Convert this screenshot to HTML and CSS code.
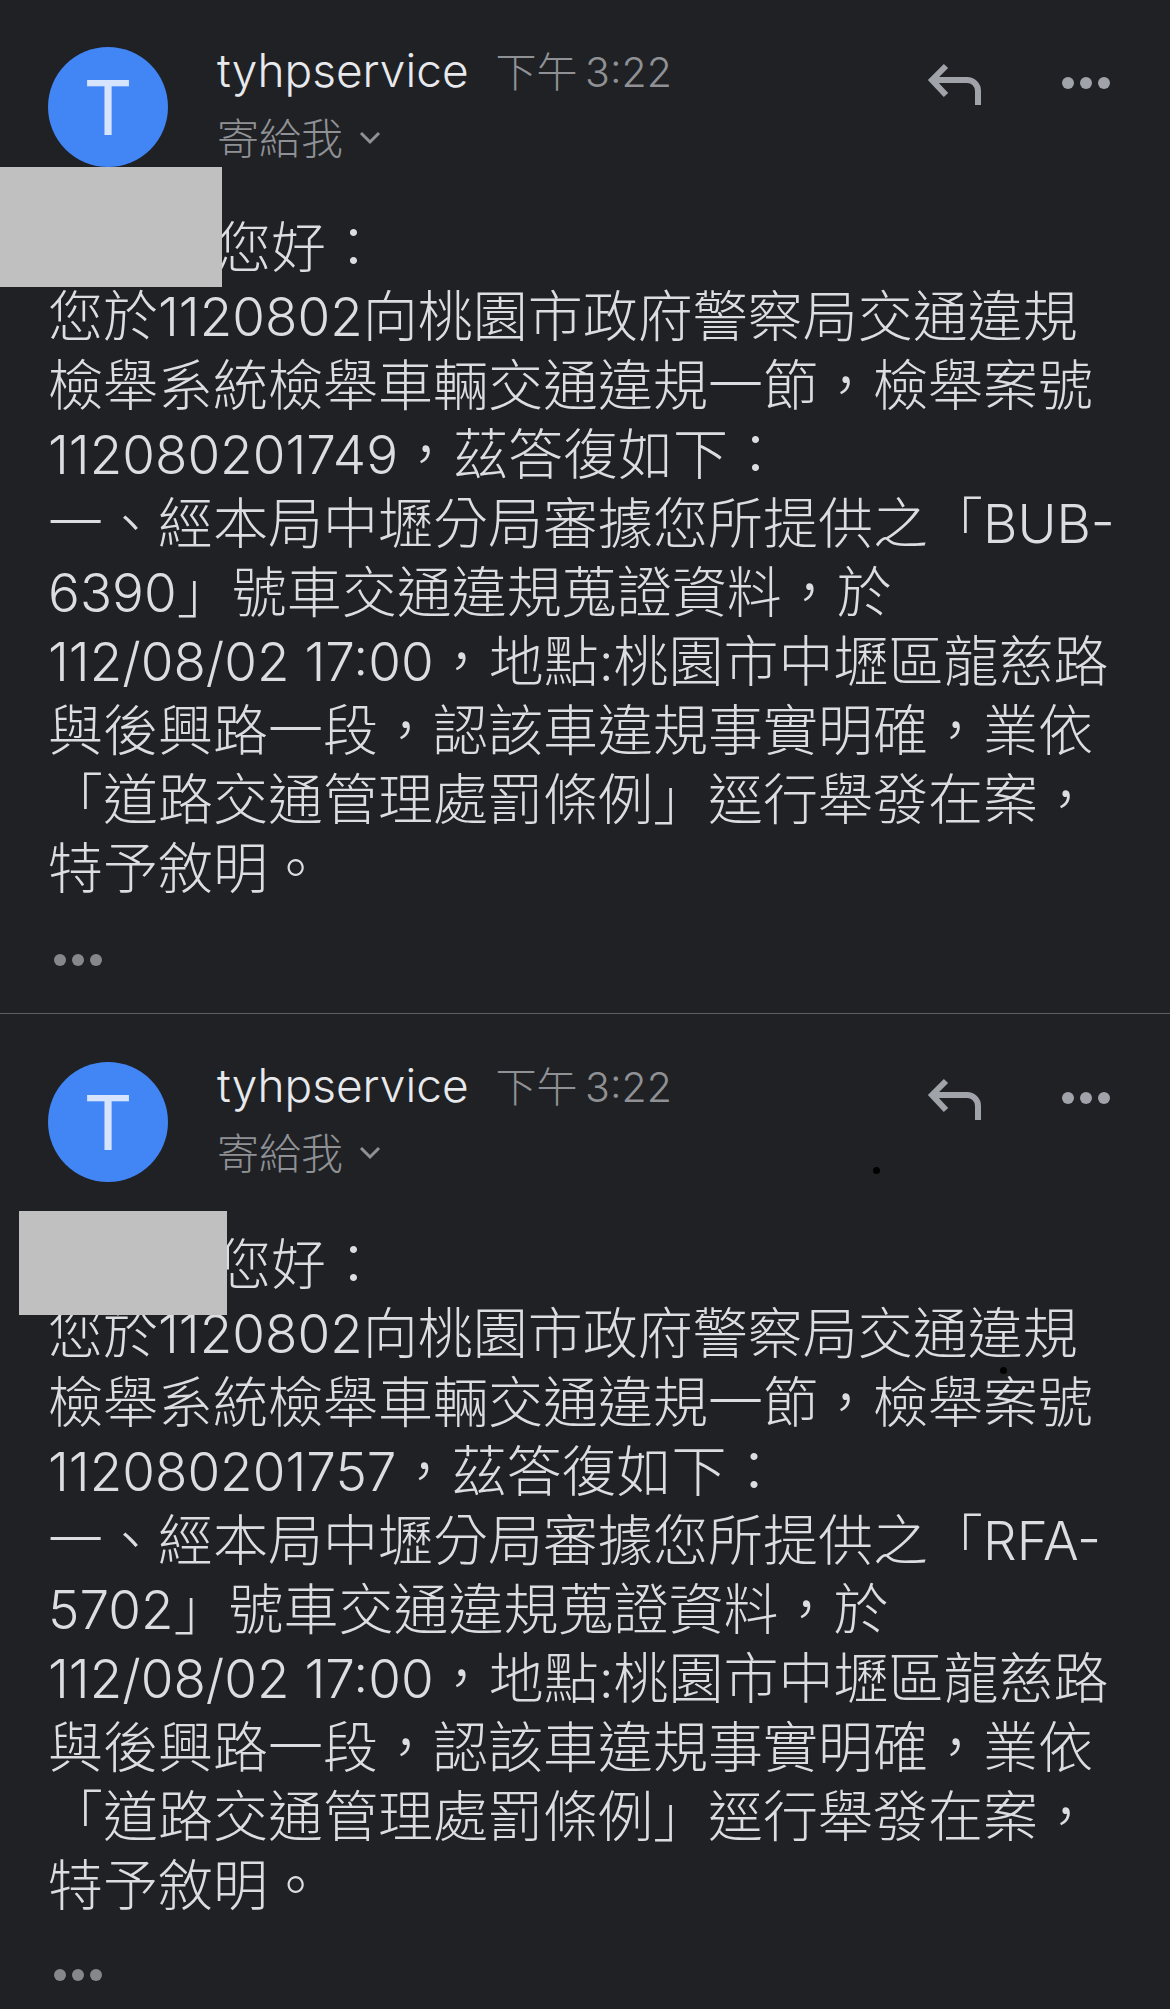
FILE: index.html
```html
<!DOCTYPE html>
<html lang="zh-Hant">
<head>
  <meta charset="UTF-8" />
  <title>tyhpservice</title>
  <link rel="stylesheet" href="styles.css">
</head>
<body>

<section class="mail mail-first">
  <div class="mail-head">
    <div class="avatar">T</div>
    <div class="meta">
      <div class="meta-top">
        <span class="sender">tyhpservice</span>
        <span class="time">下午 <span class="clock">3:22</span></span>
      </div>
      <div class="meta-to">
        <span>寄給我</span>
        <svg class="chevron" width="22" height="14" viewBox="0 0 22 14"><path d="M2 2 L11 11 L20 2" /></svg>
      </div>
    </div>
    <div class="actions">
      <svg class="reply" width="60" height="46" viewBox="0 0 60 46"><path d="M21 4 L7 18 L21 33 M7 18 H42 a11 11 0 0 1 11 11 V43" /></svg>
      <div class="dots"><span></span><span></span><span></span></div>
    </div>
  </div>
  <p class="body"><span class="greeting">您好：</span><br>您於<b>1120802</b>向桃園市政府警察局交通違規<br>檢舉系統檢舉車輛交通違規一節，檢舉案號<br><b>112080201749</b>，茲答復如下：<br>一、經本局中壢分局審據您所提供之「<b>BUB-</b><br><b>6390</b>」號車交通違規蒐證資料，於<br><b>112/08/02 17:00</b>，地點<b>:</b>桃園市中壢區龍慈路<br>與後興路一段，認該車違規事實明確，業依<br>「道路交通管理處罰條例」逕行舉發在案，<br>特予敘明。</p>
  <div class="dots dots-more"><span></span><span></span><span></span></div>
  <div class="redact redact-first"></div>
</section>

<section class="mail mail-second">
  <div class="mail-head">
    <div class="avatar">T</div>
    <div class="meta">
      <div class="meta-top">
        <span class="sender">tyhpservice</span>
        <span class="time">下午 <span class="clock">3:22</span></span>
      </div>
      <div class="meta-to">
        <span>寄給我</span>
        <svg class="chevron" width="22" height="14" viewBox="0 0 22 14"><path d="M2 2 L11 11 L20 2" /></svg>
      </div>
    </div>
    <div class="actions">
      <svg class="reply" width="60" height="46" viewBox="0 0 60 46"><path d="M21 4 L7 18 L21 33 M7 18 H42 a11 11 0 0 1 11 11 V43" /></svg>
      <div class="dots"><span></span><span></span><span></span></div>
    </div>
  </div>
  <p class="body"><span class="greeting">您好：</span><br>您於<b>1120802</b>向桃園市政府警察局交通違規<br>檢舉系統檢舉車輛交通違規一節，檢舉案號<br><b>112080201757</b>，茲答復如下：<br>一、經本局中壢分局審據您所提供之「<b>RFA-</b><br><b>5702</b>」號車交通違規蒐證資料，於<br><b>112/08/02 17:00</b>，地點<b>:</b>桃園市中壢區龍慈路<br>與後興路一段，認該車違規事實明確，業依<br>「道路交通管理處罰條例」逕行舉發在案，<br>特予敘明。</p>
  <div class="dots dots-more"><span></span><span></span><span></span></div>
  <div class="redact redact-second"></div>
  <i class="speck speck-a"></i>
  <i class="speck speck-b"></i>
</section>

</body>
</html>
```

FILE: styles.css
```css
body {
  margin: 0;
  background: #1f2125;
  font-family: Inter, "Noto Sans CJK TC", sans-serif;
  color: #dcdde0;
  overflow: hidden;
}
.mail {
  position: relative;
  padding: 47px 0 47px;
}
.mail-first {
  border-bottom: 1px solid #5e5f63;
}
.mail-second {
  padding-top: 48px;
}
.mail-head {
  display: flex;
  height: 120px;
  padding: 0 60px 0 48px;
}
.avatar {
  width: 120px;
  height: 120px;
  border-radius: 50%;
  background: #4285f4;
  color: #d6e4fd;
  font-size: 76px;
  font-weight: 400;
  line-height: 120px;
  text-align: center;
  flex: none;
}
.meta {
  margin-left: 49px;
}
.meta-top {
  display: flex;
  align-items: baseline;
  gap: 27px;
  height: 47px;
  line-height: 47px;
}
.sender {
  font-size: 46px;
  font-weight: 300;
  color: #e8e9ec;
}
.time {
  font-size: 41px;
  font-weight: 300;
  word-spacing: -4px;
  color: #8f9195;
}
.clock {
  font-size: 41px;
}
.meta-to {
  display: flex;
  align-items: center;
  gap: 16px;
  margin-top: 17px;
  font-size: 42px;
  font-weight: 300;
  line-height: 56px;
  color: #8f9195;
}
.chevron {
  margin-top: -2px;
}
.chevron path {
  fill: none;
  stroke: #8f9195;
  stroke-width: 3;
}
.actions {
  display: flex;
  align-items: flex-start;
  gap: 77px;
  margin-left: auto;
  padding-top: 15px;
}
.reply path {
  fill: none;
  stroke: #a0a3a9;
  stroke-width: 6;
}
.dots {
  display: flex;
  gap: 6px;
  margin-top: 15px;
}
.dots span {
  width: 12px;
  height: 12px;
  border-radius: 50%;
  background: #a0a3a9;
}
.body {
  margin: 46px 0 0 48px;
  font-size: 55px;
  font-weight: 300;
  line-height: 69px;
  white-space: nowrap;
}
.body b {
  font-size: 53px;
  font-weight: 300;
  line-height: 1;
}
.mail-second .body {
  margin-top: 48px;
}
.greeting {
  padding-left: 168px;
}
.dots-more {
  margin: 51px 0 0 54px;
}
.mail-second .dots-more {
  margin-top: 49px;
}
.dots-more span {
  background: #85878b;
}
.redact {
  position: absolute;
  background: #c0c0c0;
}
.redact-first {
  left: 0;
  top: 167px;
  width: 222px;
  height: 120px;
}
.redact-second {
  left: 19px;
  top: 197px;
  width: 208px;
  height: 104px;
}
.speck {
  position: absolute;
  width: 7px;
  height: 7px;
  border-radius: 50%;
  background: #000;
}
.speck-a {
  left: 873px;
  top: 153px;
}
.speck-b {
  left: 1000px;
  top: 353px;
}
```
